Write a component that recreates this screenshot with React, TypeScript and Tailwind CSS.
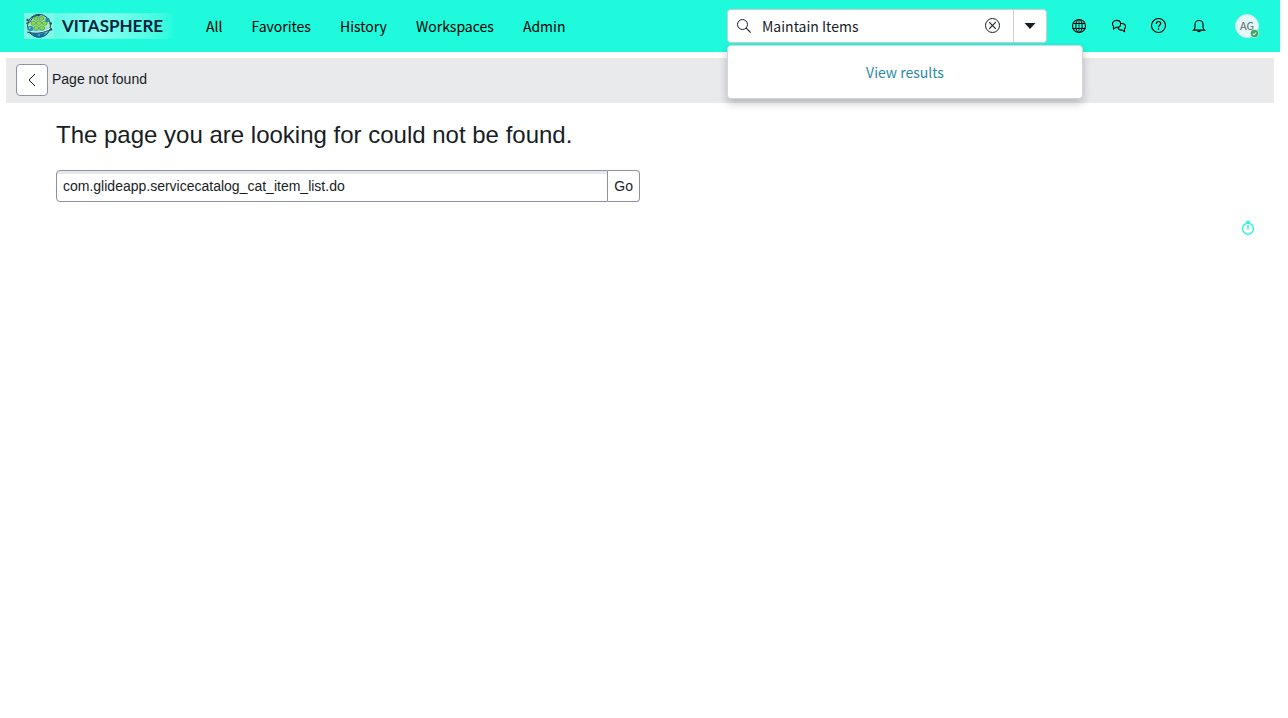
import React, { useState } from "react";

type IconProps = { className?: string; children: React.ReactNode };

function Icon({ className = "size-4", children }: IconProps) {
  return (
    <svg
      viewBox="0 0 16 16"
      className={className}
      fill="none"
      stroke="currentColor"
      strokeWidth="1.1"
      aria-hidden="true"
    >
      {children}
    </svg>
  );
}

const SearchIcon = () => (
  <Icon>
    <circle cx="6.500" cy="6.500" r="5" strokeWidth="1" />
    <path d="M10.100 10.100 14.700 14.700" strokeWidth="1.100" />
  </Icon>
);

const ClearIcon = () => (
  <Icon>
    <circle cx="7.500" cy="7.500" r="7" strokeWidth="1" />
    <path d="M4.200 4.200l6.600 6.600M10.800 4.200l-6.600 6.600" />
  </Icon>
);

const CaretIcon = () => (
  <Icon>
    <path d="M2.500 5h11L8 11z" fill="currentColor" stroke="none" />
  </Icon>
);

const GlobeIcon = () => (
  <Icon>
    <circle cx="8" cy="8" r="6.500" />
    <ellipse cx="8" cy="8" rx="3.200" ry="6.500" strokeWidth="1" />
    <path d="M2.200 5.500h11.600M2.200 10.500h11.600" strokeWidth="1" />
    <path d="M8 1.500v13" strokeWidth=".7" />
  </Icon>
);

const ChatIcon = () => (
  <Icon>
    <path d="M2.500 8.400V11l2.600-1.600h.700c2.200 0 3.800-1.500 3.800-3.500S7.900 2.400 5.600 2.400 1.500 3.900 1.500 5.900c0 1 .4 1.900 1 2.500z" />
    <path d="M9.500 5.500h1.300c2.200 0 3.700 1.300 3.700 3.100 0 1-.4 1.700-1 2.300v2.700l-2.300-1.500h-.700c-1.900 0-3.300-1.200-3.500-3" />
  </Icon>
);

const HelpIcon = () => (
  <Icon>
    <circle cx="7.500" cy="7.500" r="7" />
    <path d="M5.300 5.900c0-1.500.9-2.400 2.200-2.400s2.200.8 2.200 2.100c0 1.600-2.200 1.700-2.200 3.600" />
    <path d="M7.500 10.300v1.400" strokeWidth="1.300" />
  </Icon>
);

const BellIcon = () => (
  <Icon>
    <path d="M2.500 12.100c1.200-.9 1.500-1.800 1.500-3.200V6.500C4 4 5.700 2.500 8 2.500s4 1.500 4 4v2.400c0 1.400.3 2.300 1.500 3.200z" />
    <path d="M6.500 12.300c.1 1 .7 1.500 1.500 1.500s1.400-.5 1.500-1.500" />
  </Icon>
);

function Logo() {
  return (
    <a
      href="#home"
      aria-label="Vitasphere home"
      className="flex h-[26px] w-[150px] shrink-0 items-center bg-linear-to-r from-[#3ff9e0] via-[#84fff0] to-[#1ffadc]"
    >
      <svg viewBox="0 0 30 26" className="h-[26px] w-[30px] shrink-0" aria-hidden="true">
        <defs>
          <linearGradient id="sphere" x1="0" y1="0" x2="0" y2="1">
            <stop offset="0" stopColor="#7ccfc0" />
            <stop offset=".45" stopColor="#b9f0b0" />
            <stop offset=".65" stopColor="#7fdcd8" />
            <stop offset="1" stopColor="#1b7fae" />
          </linearGradient>
        </defs>
        <path d="M0 0h30v26H0z" fill="#7df9e4" />
        <circle cx="15" cy="12.800" r="11.500" fill="url(#sphere)" stroke="#1c4a5c" strokeWidth="1" />
        <g fill="#86df3c" stroke="#2f7a4d" strokeWidth=".5">
          <path d="M12 3.500l2 1v2l-2 1-2-1v-2zM17.500 3.500l2 1v2l-2 1-2-1v-2z" />
          <path d="M9.300 8l2.200 1v2.300l-2.200 1.200-2.200-1.200V9zM15 7.700l2.400 1.200v2.400L15 12.500l-2.400-1.200V8.900zM20.700 8l2.200 1v2.300l-2.200 1.200-2.200-1.200V9z" />
          <path d="M12.200 12.700l2.300 1.200v2.200l-2.300 1.100-2.300-1.100v-2.200zM18 12.700l2.300 1.200v2.200L18 17.200l-2.300-1.100v-2.200z" />
        </g>
        <path d="M4 17.500c7 2.500 15 2 22-2" fill="none" stroke="#d6fffa" strokeWidth="1.300" />
        <path d="M2 10.500l4-1.500 3-5 6-2.500M3 19c7 2.500 17 1.500 25-3.500" fill="none" stroke="#143f5a" strokeWidth=".9" />
        <path d="M9 20.500l5 1-1 3-3-1.500zM16 21l5-1-2 3.500-3 1z" fill="#0d6fa8" />
        <circle cx="6.500" cy="15.500" r="2.700" fill="#2591b5" />
        <circle cx="5.800" cy="14.800" r=".9" fill="#91dcea" />
        <circle cx="23.500" cy="7" r="2.200" fill="#2688b2" />
        <circle cx="3.500" cy="7" r="1.200" fill="#20536c" />
        <circle cx="14.500" cy="2.200" r="1.200" fill="#20536c" />
        <circle cx="26.800" cy="10.500" r="1.200" fill="#20536c" />
        <circle cx="27" cy="16.500" r="1.200" fill="#20536c" />
      </svg>
      <span className="pl-2 font-['Lato',sans-serif] text-[17px] leading-[26px] font-bold text-[#062440]">
        VITASPHERE
      </span>
    </a>
  );
}

const navItems = ["All", "Favorites", "History", "Workspaces", "Admin"];

const tools = [
  { label: "Language scope", icon: <GlobeIcon /> },
  { label: "Conversations", icon: <ChatIcon /> },
  { label: "Help", icon: <HelpIcon /> },
  { label: "Notifications", icon: <BellIcon /> },
];

function Search() {
  const [term, setTerm] = useState("Maintain Items");
  return (
    <div className="relative w-80 shrink-0">
      <div className="flex h-[34px] overflow-hidden rounded border border-[#cbced3] bg-white text-[#181d27]">
        <label htmlFor="global-search" className="flex items-center pr-2.5 pl-2" aria-label="Search">
          <SearchIcon />
        </label>
        <input
          id="global-search"
          type="text"
          value={term}
          onChange={(e) => setTerm(e.target.value)}
          className="min-w-0 flex-1 bg-transparent text-sm leading-6 outline-none"
        />
        <button type="button" aria-label="Clear search" onClick={() => setTerm("")} className="px-3">
          <ClearIcon />
        </button>
        <button
          type="button"
          aria-label="Search options"
          className="flex w-[33px] items-center justify-center border-l border-[#cbced3]"
        >
          <CaretIcon />
        </button>
      </div>
      <div className="absolute top-9 left-0 z-10 flex h-[54px] w-[356px] items-center justify-center rounded border border-[#d4d5db] bg-white shadow-[0_4px_8px_rgba(24,29,40,0.25)]">
        <a href="#results" className="text-sm leading-6 text-[#2b8ba3]">
          View results
        </a>
      </div>
    </div>
  );
}

function Header() {
  return (
    <header className="flex h-13 items-center bg-[#1ffadd] pr-[21px] pl-6 font-['Noto_Sans_CJK_SC',sans-serif] text-black">
      <Logo />
      <nav className="flex gap-[29px] pl-8 text-sm leading-6">
        {navItems.map((item) => (
          <a key={item} href={"#" + item.toLowerCase()}>
            {item}
          </a>
        ))}
      </nav>
      <div className="ml-auto flex items-center">
        <Search />
        <div className="flex gap-6 pl-6">
          {tools.map((tool) => (
            <button key={tool.label} type="button" aria-label={tool.label}>
              {tool.icon}
            </button>
          ))}
        </div>
        <button
          type="button"
          aria-label="User menu"
          className="relative ml-7 flex size-6 items-start justify-center rounded-full border border-[#c4eae8] bg-[#e4f8f7] text-[11px] leading-5 text-[#5b6572]"
        >
          AG
          <svg viewBox="0 0 8 8" className="absolute -right-px -bottom-px size-[9px]" aria-hidden="true">
            <circle cx="4" cy="4" r="3.600" fill="#3fa364" stroke="#d3f5ec" strokeWidth=".7" />
            <path d="M2.500 4.200l1 .9 2-2" fill="none" stroke="#e8fff0" strokeWidth=".9" />
          </svg>
        </button>
      </div>
    </header>
  );
}

export default function App() {
  const [page, setPage] = useState("com.glideapp.servicecatalog_cat_item_list.do");
  return (
    <div className="min-h-screen bg-white pr-2 font-['Liberation_Sans',sans-serif] text-sm text-[#181d25]">
      <Header />
      <main className="px-1.5 pt-1.5">
        <div className="flex items-start gap-1 bg-[#e8eaec] px-2.5 pt-1.5 pb-[7px]">
          <button
            type="button"
            aria-label="Back"
            className="flex size-8 items-center justify-center rounded border border-[#8f939f] bg-white"
          >
            <Icon>
              <path d="M11 2 5 8l6 6" strokeWidth="1" />
            </Icon>
          </button>
          <span className="leading-[30px]">Page not found</span>
        </div>
        <div className="px-[50px]">
          <h1 className="pt-4 text-2xl leading-8">The page you are looking for could not be found.</h1>
          <form className="mt-[19px] flex h-8 max-w-[584px]" onSubmit={(e) => e.preventDefault()}>
            <input
              type="text"
              aria-label="Page name"
              value={page}
              onChange={(e) => setPage(e.target.value)}
              className="min-w-0 flex-1 rounded-l border border-[#8f91a1] px-1.5 leading-5 shadow-[inset_0_3px_0_#e6e7ea] outline-none"
            />
            <button type="submit" className="rounded-r border border-l-0 border-[#8f91a1] bg-white px-1.5 leading-5">
              Go
            </button>
          </form>
        </div>
        <div className="mt-[18px] flex justify-end pr-[18px]">
          <button type="button" aria-label="Response time" className="text-[#1ffadd]">
            <Icon>
              <circle cx="8" cy="8.700" r="5.500" strokeWidth="1.400" />
              <path d="M6 1.800h4M8 2v1.500M8 5V9.500" strokeWidth="1.500" />
            </Icon>
          </button>
        </div>
      </main>
    </div>
  );
}
